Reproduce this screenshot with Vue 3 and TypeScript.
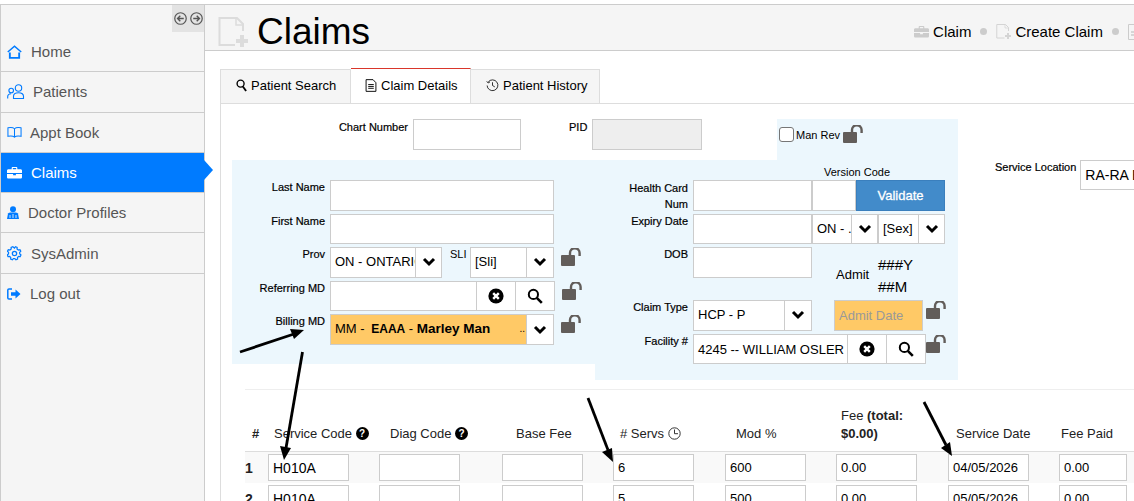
<template>
  <div class="app">
    <!-- shared icons -->
    <svg class="sprite" aria-hidden="true">
      <symbol id="lock" viewBox="0 0 22 18">
        <rect x="0" y="7" width="14" height="11" rx="1" fill="#625d5a" />
        <path d="M9 8V5a4.8 4.8 0 0 1 9.6 0v3" fill="none" stroke="#625d5a" stroke-width="2.4" />
      </symbol>
      <symbol id="chev" viewBox="0 0 14 10">
        <path d="M2 2l5 5 5-5" fill="none" stroke="#000" stroke-width="3" />
      </symbol>
      <symbol id="clear" viewBox="0 0 16 16">
        <circle cx="8" cy="8" r="7.6" fill="#000" />
        <path d="M5.2 5.2l5.6 5.6M10.8 5.2l-5.6 5.6" stroke="#fff" stroke-width="2.4" />
      </symbol>
      <symbol id="find" viewBox="0 0 16 16">
        <circle cx="6.4" cy="6.4" r="4.6" fill="none" stroke="#000" stroke-width="2" />
        <path d="M9.8 9.8l5 5" stroke="#000" stroke-width="2.6" />
      </symbol>
      <symbol id="doc-plus" viewBox="0 0 30 30">
        <path d="M25 14V7l-6-6H1.500v27H17" fill="none" stroke="currentColor" stroke-width="2" />
        <path d="M18 1v7h7" fill="none" stroke="currentColor" stroke-width="1.500" />
        <path d="M24 18v12M18 24h12" stroke="currentColor" stroke-width="4" />
      </symbol>
    </svg>

    <aside class="sidebar">
      <div class="collapse-row">
        <div class="collapse">
          <svg viewBox="0 0 12 12" width="13" height="13"><circle cx="6" cy="6" r="5.300" fill="none" stroke="#555" stroke-width="1.100" /><path d="M9 6H3.500M5.800 3.500L3.300 6l2.500 2.500" fill="none" stroke="#555" stroke-width="1.300" /></svg>
          <svg viewBox="0 0 12 12" width="13" height="13"><circle cx="6" cy="6" r="5.300" fill="none" stroke="#555" stroke-width="1.100" /><path d="M3 6h5.500M6.200 3.500L8.700 6l-2.500 2.500" fill="none" stroke="#555" stroke-width="1.300" /></svg>
        </div>
      </div>
      <nav>
        <a v-for="item in navItems" :key="item.label" class="nav-item" :class="{ active: item.active }">
          <span class="nav-icon" :style="{ width: item.slot + 'px' }">
            <svg v-if="item.icon === 'home'" viewBox="0 0 16 15" width="15" height="14" fill="none" stroke="#007bff" stroke-width="1.600"><path d="M.8 7.500L8 1.200l7.200 6.300" /><path d="M3 8v5.800h10V8" stroke-width="2" /></svg>
            <svg v-else-if="item.icon === 'users'" viewBox="0 0 18 15" width="18" height="15" fill="none" stroke="#007bff" stroke-width="1.100"><circle cx="11.500" cy="4" r="3.200" /><path d="M6.500 14.500v-2.300c0-2 1.800-3.500 5-3.500s5 1.500 5 3.500v2.300z" /><circle cx="4.200" cy="6.500" r="2.300" /><path d="M.7 14.500v-1.800c0-1.800 1.300-3 3.500-3" /></svg>
            <svg v-else-if="item.icon === 'book'" viewBox="0 0 16 13" width="15" height="13" fill="none" stroke="#007bff" stroke-width="1.100"><path d="M8 2.500C6.500 1 3.500 1 1 1.500v9c2.500-.5 5.500-.5 7 1 1.500-1.500 4.500-1.500 7-1v-9C12.500 1 9.500 1 8 2.500zM8 2.500v9" /></svg>
            <svg v-else-if="item.icon === 'case'" viewBox="0 0 16 13" width="15" height="13" fill="#fff"><path d="M5 3V1.500C5 .8 5.600.5 6 .5h4c.4 0 1 .3 1 1V3h3.500c.8 0 1.500.6 1.500 1.400V7H0V4.400C0 3.600.7 3 1.500 3zm1.200 0h3.600V1.700H6.200zM0 8h6.500v1.500h3V8H16v3.500c0 .8-.7 1.500-1.500 1.500h-13C.7 13 0 12.300 0 11.500z" /></svg>
            <svg v-else-if="item.icon === 'doctor'" viewBox="0 0 12 13" width="12" height="13" fill="#007bff"><circle cx="6" cy="3.200" r="3" /><path d="M1 7.500C1.500 6.800 3 6.500 4 6.500h4c1 0 2.500.3 3 1L12 13H0z" /><path d="M3 9v3M6 8v4M9 9v3" stroke="#fff" stroke-width=".8" /></svg>
            <svg v-else-if="item.icon === 'gear'" viewBox="0 0 16 16" width="15" height="15" fill="none" stroke="#007bff"><circle cx="8" cy="8" r="2.300" stroke-width="1.400" /><path d="M8 2.200l1-1.400 1.800.7-.1 1.700 1.400 1.100 1.700-.4.900 1.700-1.200 1.200.1 1.600 1.300 1.100-.8 1.800-1.700-.2-1.200 1.200.1 1.700-1.800.7-1.100-1.300H6.800l-1.100 1.300-1.800-.7.100-1.700-1.200-1.200-1.700.2-.8-1.800 1.300-1.100.1-1.600L.5 5.600l.9-1.700 1.700.4 1.400-1.100-.1-1.700L6.200.8z" stroke-width="1.300" /></svg>
            <svg v-else viewBox="0 0 14 12" width="14" height="12"><path d="M5 1H2C1.200 1 .8 1.500.8 2v8c0 .5.400 1 1.200 1h3" fill="none" stroke="#007bff" stroke-width="1.500" /><path d="M4 4.300h4.500V1.500L13.500 6l-5 4.500V7.700H4z" fill="#007bff" /></svg>
          </span>
          <span>{{ item.label }}</span>
        </a>
      </nav>
    </aside>

    <main class="main">
      <header class="page-head">
        <svg class="head-icon"><use href="#doc-plus" /></svg>
        <h1>Claims</h1>
        <div class="crumbs">
          <svg viewBox="0 0 16 13" width="15" height="13" fill="#ccc"><path d="M5 3V1.500C5 .8 5.600.5 6 .5h4c.4 0 1 .3 1 1V3h3.500c.8 0 1.500.6 1.500 1.400V7H0V4.400C0 3.600.7 3 1.500 3zm1.200 0h3.600V1.700H6.200zM0 8h6.500v1.500h3V8H16v3.500c0 .8-.7 1.500-1.500 1.500h-13C.7 13 0 12.300 0 11.500z" /></svg>
          <span class="crumb-text first">Claim</span>
          <i class="dot"></i>
          <svg class="crumb-doc"><use href="#doc-plus" /></svg>
          <span class="crumb-text">Create Claim</span>
          <i class="dot"></i>
          <svg viewBox="0 0 14 16" width="14" height="16" fill="none" stroke="#ccc"><path d="M.5.500h13v15H.5z" /><path d="M3 8h8M3 11h8" stroke-width="1.500" /></svg>
        </div>
      </header>

      <div class="content">
        <div class="tabs">
          <div class="tab tab-search">
            <svg viewBox="0 0 12 14" width="11" height="13" fill="none" stroke="#000"><circle cx="5" cy="5" r="3.800" stroke-width="1.500" /><path d="M7.500 8l3.500 5" stroke-width="2" /></svg>
            Patient Search
          </div>
          <div class="tab tab-details">
            <svg viewBox="0 0 12 14" width="12" height="13" fill="none" stroke="#000"><path d="M.7.700h7.500L11.300 4v9.300H.7z" /><path d="M3 6h6M3 8h6M3 10h6" /></svg>
            Claim Details
          </div>
          <div class="tab tab-history">
            <svg viewBox="0 0 14 14" width="13" height="13" fill="none" stroke="#222"><path d="M2.400 3.200A5.800 5.800 0 1 1 1.200 7" /><path d="M.8 2.500l1.500 1.800 2-1.200M7 3.500V7l2.500 1.500" /></svg>
            Patient History
          </div>
        </div>

        <div class="panel">
          <div class="form-wrap">
            <div class="form">
              <div class="top-row">
                <div class="top-left">
                  <label class="chart-label">Chart Number</label>
                  <div class="input chart-input"></div>
                  <label class="pid-label">PID</label>
                  <div class="input pid-input"></div>
                </div>
                <div class="top-right">
                  <span class="check"></span>
                  <span class="man-rev">Man Rev</span>
                  <svg class="lock"><use href="#lock" /></svg>
                </div>
              </div>

              <div class="blue-row">
                <section class="col col-left">
                  <div class="field">
                    <label class="lbl">Last Name</label>
                    <div class="input w-full"></div>
                  </div>
                  <div class="field">
                    <label class="lbl">First Name</label>
                    <div class="input w-full"></div>
                  </div>
                  <div class="field">
                    <label class="lbl">Prov</label>
                    <div class="select prov">
                      <span class="val">ON - ONTARIO</span>
                      <span class="chev"><svg><use href="#chev" /></svg></span>
                    </div>
                    <label class="sli-label">SLI</label>
                    <div class="select sli">
                      <span class="val">[Sli]</span>
                      <span class="chev"><svg><use href="#chev" /></svg></span>
                    </div>
                    <svg class="lock"><use href="#lock" /></svg>
                  </div>
                  <div class="field">
                    <label class="lbl">Referring MD</label>
                    <div class="input ref-input"></div>
                    <span class="btn"><svg class="ico"><use href="#clear" /></svg></span>
                    <span class="btn"><svg class="ico"><use href="#find" /></svg></span>
                    <svg class="lock"><use href="#lock" /></svg>
                  </div>
                  <div class="field">
                    <label class="lbl">Billing MD</label>
                    <div class="select billing">
                      <span class="val bill-val"><span>MM - <b class="bill-code">EAAA</b> - <b class="bill-name">Marley Man</b></span><span class="more">..</span></span>
                      <span class="chev"><svg><use href="#chev" /></svg></span>
                    </div>
                    <svg class="lock"><use href="#lock" /></svg>
                  </div>
                </section>

                <section class="col col-right">
                  <div class="version">Version Code</div>
                  <div class="field">
                    <label class="lbl lbl-wrap">Health Card Num</label>
                    <div class="input w-card"></div>
                    <div class="input w-version"></div>
                    <button class="validate">Validate</button>
                  </div>
                  <div class="field">
                    <label class="lbl">Expiry Date</label>
                    <div class="input w-card"></div>
                    <div class="select exp-prov">
                      <span class="val">ON - .</span>
                      <span class="chev"><svg><use href="#chev" /></svg></span>
                    </div>
                    <div class="select exp-sex">
                      <span class="val">[Sex]</span>
                      <span class="chev"><svg><use href="#chev" /></svg></span>
                    </div>
                  </div>
                  <div class="field field-dob">
                    <label class="lbl">DOB</label>
                    <div class="input w-card"></div>
                    <span class="admit">Admit</span>
                    <div class="age"><div>###Y</div><div>##M</div></div>
                  </div>
                  <div class="field">
                    <label class="lbl">Claim Type</label>
                    <div class="select w-card">
                      <span class="val">HCP - P</span>
                      <span class="chev"><svg><use href="#chev" /></svg></span>
                    </div>
                    <div class="input admit-date">Admit Date</div>
                    <svg class="lock lock-tight"><use href="#lock" /></svg>
                  </div>
                  <div class="field">
                    <label class="lbl">Facility #</label>
                    <div class="input facility">4245 -- WILLIAM OSLER</div>
                    <span class="btn"><svg class="ico"><use href="#clear" /></svg></span>
                    <span class="btn"><svg class="ico"><use href="#find" /></svg></span>
                    <svg class="lock lock-flush"><use href="#lock" /></svg>
                  </div>
                </section>
              </div>
            </div>

            <div class="service-loc">
              <label>Service Location</label>
              <div class="input loc-input">RA-RA E</div>
            </div>
          </div>

          <div class="table">
            <div class="grid-row thead">
              <div class="th num">#</div>
              <div class="th">Service Code <span class="help">?</span></div>
              <div class="th">Diag Code <span class="help">?</span></div>
              <div class="th">Base Fee</div>
              <div class="th">
                # Servs
                <svg viewBox="0 0 13 13" width="13" height="13" fill="none" stroke="#333"><circle cx="6.500" cy="6.500" r="5.700" /><path d="M6.500 2.500v4.200H10" /></svg>
              </div>
              <div class="th">Mod %</div>
              <div class="th fee-th">Fee <b>(total: $0.00)</b></div>
              <div class="th">Service Date</div>
              <div class="th">Fee Paid</div>
            </div>
            <div v-for="(row, i) in rows" :key="i" class="grid-row tr" :class="{ odd: i === 0 }">
              <div class="rownum">{{ i + 1 }}</div>
              <div v-for="(cell, c) in row" :key="c" class="td">
                <div class="input cell" :class="{ big: c === 0, narrow: c === 7 }">{{ cell }}</div>
              </div>
            </div>
          </div>
        </div>
      </div>
    </main>

    <!-- annotation arrows drawn over the screenshot -->
    <svg class="arrows" width="1134" height="501">
      <g fill="none" stroke="#000" stroke-width="2.800">
        <path d="M240 352L294 334" />
        <path d="M302.500 352L286 448" />
        <path d="M588 398L608 450" />
        <path d="M924 402L946 445" />
      </g>
      <g fill="#000">
        <path d="M304 330L290 329L294 339z" />
        <path d="M284 460L280 446L291 448z" />
        <path d="M613 462L602 452L612 448z" />
        <path d="M952 456L941 448L950 442z" />
      </g>
    </svg>
  </div>
</template>

<script setup lang="ts">
interface NavItem {
  label: string;
  icon: string;
  slot: number;
  active?: boolean;
}

const navItems: NavItem[] = [
  { label: 'Home', icon: 'home', slot: 24 },
  { label: 'Patients', icon: 'users', slot: 26 },
  { label: 'Appt Book', icon: 'book', slot: 23 },
  { label: 'Claims', icon: 'case', slot: 24, active: true },
  { label: 'Doctor Profiles', icon: 'doctor', slot: 21 },
  { label: 'SysAdmin', icon: 'gear', slot: 24 },
  { label: 'Log out', icon: 'logout', slot: 23 },
];

const rows: string[][] = [
  ['H010A', '', '', '6', '600', '0.00', '04/05/2026', '0.00'],
  ['H010A', '', '', '5', '500', '0.00', '05/05/2026', '0.00'],
];
</script>

<style scoped>
.app {
  position: relative;
  display: flex;
  height: 501px;
  width: 1134px;
  overflow: hidden;
  padding-top: 4px;
  box-sizing: border-box;
  background: #fff;
  font-family: "Liberation Sans", Arial, sans-serif;
  color: #000;
}
.sprite {
  position: absolute;
  width: 0;
  height: 0;
}

/* sidebar */
.sidebar {
  flex: 0 0 205px;
  box-sizing: border-box;
  background: #f5f5f5;
  border: 1px solid #ccc;
  border-width: 1px 1px 0 1px;
}
.collapse-row {
  display: flex;
  justify-content: flex-end;
  height: 27px;
}
.collapse {
  width: 32px;
  background: #e3e3e3;
  display: flex;
  align-items: center;
  justify-content: center;
  gap: 3px;
}
.nav-item {
  position: relative;
  display: flex;
  align-items: center;
  box-sizing: border-box;
  height: 40.300px;
  padding-left: 6px;
  border-bottom: 1px solid #ccc;
  font-size: 15px;
  color: #555;
}
.nav-item:last-child {
  border-bottom: 0;
}
.nav-item.active {
  background: #007bff;
  color: #fff;
}
.nav-item.active::after {
  content: "";
  position: absolute;
  left: 100%;
  top: 7px;
  border-left: 9px solid #007bff;
  border-top: 10px solid transparent;
  border-bottom: 10px solid transparent;
}
.nav-icon {
  display: flex;
  align-items: center;
  flex-shrink: 0;
}

/* header */
.main {
  flex: 1;
  min-width: 0;
  display: flex;
  flex-direction: column;
}
.page-head {
  flex: 0 0 47px;
  min-height: 0;
  box-sizing: border-box;
  display: flex;
  align-items: center;
  background: #f5f5f5;
  border-top: 1px solid #ccc;
  border-bottom: 1px solid #ccc;
  padding-left: 13px;
}
.head-icon {
  flex-shrink: 0;
  width: 30px;
  height: 30px;
  color: #dcdcdc;
  margin-top: 8px;
}
.page-head h1 {
  margin: 8px 0 0 9px;
  font-size: 37px;
  font-weight: 400;
  line-height: 37px;
  color: #000;
}
.crumbs {
  flex-shrink: 0;
  display: flex;
  align-items: center;
  margin-left: 544px;
  margin-top: 8px;
  font-size: 15px;
  white-space: nowrap;
}
.crumb-text {
  margin-left: 5px;
}
.crumb-text.first {
  margin-left: 4px;
}
.dot {
  width: 7px;
  height: 7px;
  border-radius: 50%;
  background: #ccc;
  margin: 0 9px;
}
.crumb-doc {
  width: 15px;
  height: 15px;
  color: #d4d4d4;
  margin-right: -1px;
}

/* tabs */
.content {
  flex: 1;
  display: flex;
  flex-direction: column;
  padding: 18px 0 0 15px;
  min-height: 0;
}
.tabs {
  display: flex;
  height: 35px;
  box-sizing: border-box;
  border-bottom: 1px solid #ddd;
  flex-shrink: 0;
}
.tab {
  display: flex;
  align-items: center;
  gap: 4px;
  box-sizing: border-box;
  height: 34px;
  background: #f5f5f5;
  border: 1px solid #ddd;
  border-width: 1px 1px 0 0;
  font-size: 13px;
  padding-left: 15px;
  padding-bottom: 2px;
}
.tab-search {
  width: 131px;
  border-left-width: 1px;
}
.tab-details {
  width: 120px;
  height: 35px;
  margin-top: -1px;
  background: #fff;
  border-top: 1px solid #d9362b;
  padding-left: 14px;
}
.tab-history {
  width: 129px;
}

/* form */
.input {
  box-sizing: border-box;
  height: 100%;
  border: 1px solid #ccc;
  background: #fff;
  font-size: 13px;
  display: flex;
  align-items: center;
  padding-left: 4px;
  white-space: nowrap;
  overflow: hidden;
}
.panel {
  flex: 1;
  border-left: 1px solid #ddd;
  padding: 15px 0 0 11px;
  min-height: 0;
}
.form-wrap {
  display: flex;
  align-items: flex-start;
}
.form {
  flex: 0 0 726px;
}
.top-row {
  display: flex;
  height: 41px;
}
.top-left {
  flex: 0 0 545px;
  display: flex;
  font-size: 11px;
}
.chart-label {
  width: 176px;
  text-align: right;
  line-height: 16px;
  -webkit-text-stroke: 0.2px #000;
}
.chart-input {
  width: 108px;
  height: 31px;
  margin-left: 5px;
}
.pid-label {
  margin-left: 48px;
  width: 17px;
  line-height: 16px;
  -webkit-text-stroke: 0.2px #000;
}
.pid-input {
  width: 110px;
  height: 31px;
  margin-left: 6px;
  background: #eee;
}
.top-right {
  flex: 1;
  display: flex;
  align-items: flex-start;
  background: #ecf7fd;
  padding: 6px 0 0 2px;
}
.check {
  width: 13px;
  height: 13px;
  margin-top: 2px;
  border: 1px solid #767676;
  border-radius: 3px;
  background: #fff;
}
.man-rev {
  margin-left: 2px;
  margin-top: 3px;
  font-size: 11px;
  line-height: 15px;
}
.top-right .lock {
  margin: 0 0 0 3px;
}
.blue-row {
  display: flex;
  align-items: flex-start;
}
.col {
  flex: 0 0 363px;
  box-sizing: border-box;
  background: #ecf7fd;
  display: flex;
  flex-direction: column;
  gap: 3px;
}
.col-left {
  height: 204px;
  padding-top: 20px;
}
.col-right {
  height: 220px;
  padding-top: 5px;
}
.version {
  height: 12px;
  padding-left: 229px;
  font-size: 11px;
  line-height: 15px;
}
.field {
  display: flex;
  align-items: flex-start;
  height: 30.600px;
}
.field-dob {
  height: 50px;
}
.lbl {
  flex: 0 0 93px;
  margin-right: 5px;
  text-align: right;
  font-size: 11px;
  line-height: 15px;
  -webkit-text-stroke: 0.2px #000;
}
.lbl-wrap {
  padding-left: 30px;
  box-sizing: border-box;
  line-height: 16px;
}
.sli-label {
  width: 28px;
  font-size: 11px;
  line-height: 15px;
  padding-left: 8px;
  box-sizing: border-box;
}
.w-full {
  width: 224px;
}
.w-card {
  width: 119px;
}
.field-dob .w-card {
  height: 31px;
}
.w-version {
  width: 44px;
}
.validate {
  box-sizing: border-box;
  width: 89px;
  height: 100%;
  border: 1px solid #3a7fbd;
  background: #428bca;
  color: #fff;
  font: 13px "Liberation Sans", Arial, sans-serif;
  -webkit-text-stroke: 0.3px #fff;
  padding: 0;
}
.select {
  box-sizing: border-box;
  display: flex;
  height: 100%;
  border: 1px solid #ccc;
  background: #fff;
  font-size: 13px;
}
.val {
  flex: 1;
  min-width: 0;
  padding-left: 4px;
  line-height: 27px;
  white-space: nowrap;
  overflow: hidden;
}
.chev {
  flex: 0 0 26px;
  display: flex;
  align-items: center;
  justify-content: center;
  border-left: 1px solid #ccc;
  background: #fff;
}
.chev svg {
  width: 14px;
  height: 10px;
}
.prov {
  width: 112px;
}
.prov .chev {
  flex-basis: 25px;
}
.sli {
  width: 84px;
}
.ref-input {
  width: 147px;
}
.btn {
  box-sizing: border-box;
  display: flex;
  align-items: center;
  justify-content: center;
  width: 39px;
  height: 100%;
  background: #fff;
  border: 1px solid #ccc;
  border-left: 0;
}
.ico {
  width: 16px;
  height: 16px;
}
.billing {
  width: 224px;
  background: #ffc966;
}
.bill-val {
  display: flex;
  justify-content: space-between;
}
.bill-code {
  margin-left: 3px;
  font-size: 12px;
}
.bill-name {
  font-size: 13.500px;
}
.more {
  padding-right: 1px;
  font-size: 10px;
}
.exp-prov {
  width: 66px;
}
.exp-sex {
  width: 67px;
}
.exp-sex .chev,
.exp-prov .chev {
  flex-basis: 25px;
}
.admit {
  margin: 20px 0 0 24px;
  font-size: 13px;
  line-height: 16px;
  width: 42px;
}
.age {
  font-size: 15px;
  line-height: 22px;
  margin-top: 7px;
}
.admit-date {
  width: 89px;
  margin-left: 22px;
  background: #ffc966;
  color: #999;
}
.facility {
  width: 155px;
}
.lock {
  flex-shrink: 0;
  width: 22px;
  height: 18px;
  margin: 1px 0 0 7px;
}
.lock-tight {
  margin-left: 3px;
}
.lock-flush {
  margin-left: 0;
}
.service-loc {
  flex-shrink: 0;
  display: flex;
  align-items: flex-start;
  margin: 41px 0 0 37px;
  font-size: 11px;
}
.service-loc label {
  white-space: nowrap;
  line-height: 14px;
  margin-right: 4px;
  -webkit-text-stroke: 0.2px #000;
}
.loc-input {
  width: 130px;
  height: 30px;
  font-size: 14px;
}

/* service lines */
.table {
  margin: 9px 0 0 13px;
  border-top: 1px solid #eee;
}
.grid-row {
  display: grid;
  grid-template-columns: 23px 111px 123px 111px 112px 111px 112px 111px 75px;
}
.thead {
  height: 61px;
  align-items: end;
  border-bottom: 1px solid #ddd;
  font-size: 13px;
  line-height: 18px;
  color: #222;
}
.th {
  padding-bottom: 8px;
}
.th svg {
  vertical-align: -2px;
}
.th.num {
  padding-left: 7px;
  font-weight: 700;
}
.th:nth-child(2) { padding-left: 6px; }
.th:nth-child(3) { padding-left: 11px; }
.th:nth-child(4) { padding-left: 14px; }
.th:nth-child(5) { padding-left: 7px; }
.th:nth-child(6) { padding-left: 11px; }
.th:nth-child(7) { padding-left: 5px; }
.th:nth-child(8) { padding-left: 8px; }
.th:nth-child(9) { padding-left: 2px; }
.fee-th {
  width: 85px;
}
.help {
  display: inline-block;
  width: 13px;
  height: 13px;
  border-radius: 50%;
  background: #000;
  color: #fff;
  font-size: 10px;
  font-weight: 700;
  line-height: 13px;
  text-align: center;
  vertical-align: 1px;
}
.tr {
  padding: 2px 0;
  align-items: center;
}
.tr.odd {
  background: #f9f9f9;
}
.rownum {
  font-size: 14px;
  font-weight: 700;
  color: #222;
}
.cell {
  width: 81px;
  height: 27px;
  font-size: 13px;
}
.cell.big {
  font-size: 14px;
}
.cell.narrow {
  width: 68px;
}

.arrows {
  position: absolute;
  left: 0;
  top: 0;
  pointer-events: none;
}
</style>

<style>
html,
body {
  margin: 0;
  overflow: hidden;
  background: #fff;
}
</style>
